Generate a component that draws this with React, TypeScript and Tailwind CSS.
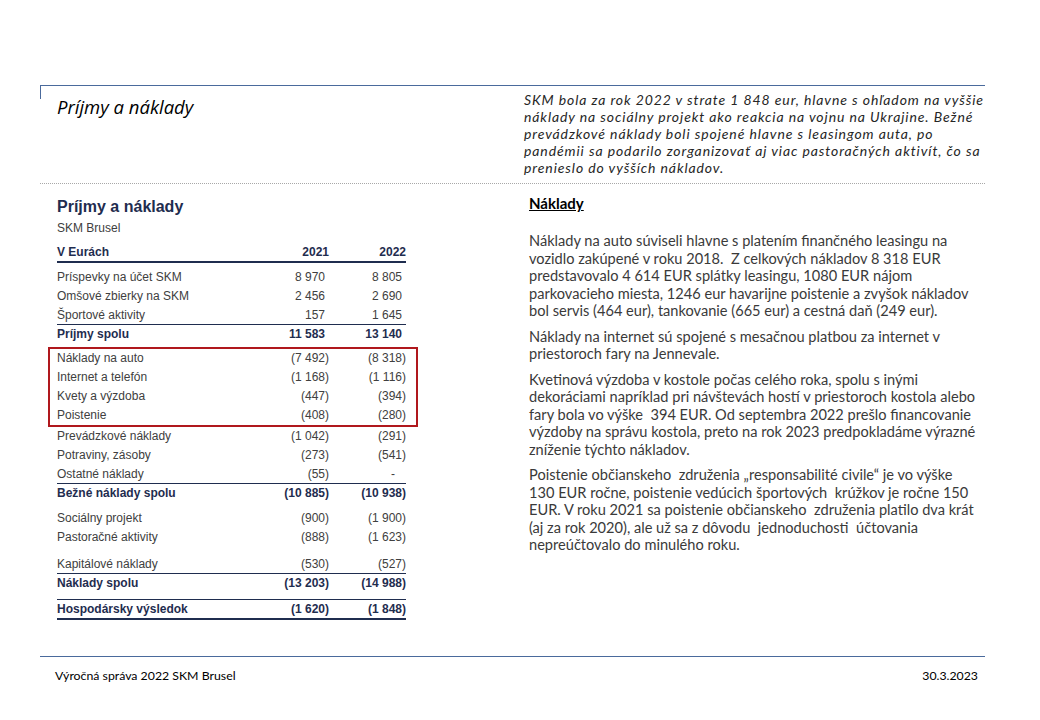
const navy = "text-[#1f2d4f]";

type RowProps = {
  label: string;
  a: string;
  b: string;
  bold?: boolean;
  line?: string;
};

function num(v: string) {
  if (v === "-") return "pr-[11px]";
  return v.startsWith("(") ? "" : "pr-[4px]";
}

function Row({ label, a, b, bold, line = "border-b border-transparent" }: RowProps) {
  return (
    <div
      className={`flex leading-[18px] ${line} ${bold ? "font-bold text-[#1f2d4f]" : "text-[#404040]"}`}
    >
      <span className="flex-1 whitespace-nowrap">{label}</span>
      <span className={`w-[90px] text-right ${num(a)}`}>{a}</span>
      <span className={`w-[77px] text-right ${num(b)}`}>{b}</span>
    </div>
  );
}

function Table() {
  return (
    <div className="w-[349px] ml-[17px] mt-[13px] text-[12px] font-['Liberation_Sans',Arial,sans-serif]">
      <div className={`text-[16px] leading-[20px] font-bold ${navy}`}>Príjmy a náklady</div>
      <div className="text-[12px] leading-[16px] mt-[3px] text-[#404040]">SKM Brusel</div>

      <div className={`flex leading-[18px] font-bold mt-[7px] border-b-2 border-[#1f2d4f] ${navy}`}>
        <span className="flex-1">V Eurách</span>
        <span className="w-[90px] text-right">2021</span>
        <span className="w-[77px] text-right">2022</span>
      </div>

      <div className="mt-[5px]">
        <Row label="Príspevky na účet SKM" a="8 970" b="8 805" />
        <Row label="Omšové zbierky na SKM" a="2 456" b="2 690" />
        <Row label="Športové aktivity" a="157" b="1 645" line="border-b border-[#1f2d4f]" />
        <Row label="Príjmy spolu" a="11 583" b="13 140" bold />
      </div>

      <div className="mt-[3px] ml-[-9px] mr-[-12px] pl-[7px] pr-[10px] border-2 border-[#b0181d]">
        <Row label="Náklady na auto" a="(7 492)" b="(8 318)" />
        <Row label="Internet a telefón" a="(1 168)" b="(1 116)" />
        <Row label="Kvety a výzdoba" a="(447)" b="(394)" />
        <Row label="Poistenie" a="(408)" b="(280)" />
      </div>

      <Row label="Prevádzkové náklady" a="(1 042)" b="(291)" />
      <Row label="Potraviny, zásoby" a="(273)" b="(541)" />
      <Row label="Ostatné náklady" a="(55)" b="-" line="border-b border-[#1f2d4f]" />
      <Row label="Bežné náklady spolu" a="(10 885)" b="(10 938)" bold />

      <div className="mt-[6px]">
        <Row label="Sociálny projekt" a="(900)" b="(1 900)" />
        <Row label="Pastoračné aktivity" a="(888)" b="(1 623)" />
      </div>

      <div className="mt-[8px]">
        <Row label="Kapitálové náklady" a="(530)" b="(527)" line="border-b border-[#1f2d4f]" />
        <Row label="Náklady spolu" a="(13 203)" b="(14 988)" bold />
      </div>

      <div className="mt-[6px]">
        <Row
          label="Hospodársky výsledok"
          a="(1 620)"
          b="(1 848)"
          bold
          line="border-t border-b-2 border-[#1f2d4f]"
        />
      </div>
    </div>
  );
}

const paragraphs: string[][] = [
  [
    "Náklady na auto súviseli hlavne s platením finančného leasingu na",
    "vozidlo zakúpené v roku 2018.  Z celkových nákladov 8 318 EUR",
    "predstavovalo 4 614 EUR splátky leasingu, 1080 EUR nájom",
    "parkovacieho miesta, 1246 eur havarijne poistenie a zvyšok nákladov",
    "bol servis (464 eur), tankovanie (665 eur) a cestná daň (249 eur).",
  ],
  [
    "Náklady na internet sú spojené s mesačnou platbou za internet v",
    "priestoroch fary na Jennevale.",
  ],
  [
    "Kvetinová výzdoba v kostole počas celého roka, spolu s inými",
    "dekoráciami napríklad pri návštevách hostí v priestoroch kostola alebo",
    "fary bola vo výške  394 EUR. Od septembra 2022 prešlo financovanie",
    "výzdoby na správu kostola, preto na rok 2023 predpokladáme výrazné",
    "zníženie týchto nákladov.",
  ],
  [
    "Poistenie občianskeho  združenia „responsabilité civile“ je vo výške",
    "130 EUR ročne, poistenie vedúcich športových  krúžkov je ročne 150",
    "EUR. V roku 2021 sa poistenie občianskeho  združenia platilo dva krát",
    "(aj za rok 2020), ale už sa z dôvodu  jednoduchosti  účtovania",
    "nepreúčtovalo do minulého roku.",
  ],
];

const intro = [
  "SKM bola za rok 2022 v strate 1 848 eur, hlavne s ohľadom na vyššie",
  "náklady na sociálny projekt ako reakcia na vojnu na Ukrajine. Bežné",
  "prevádzkové náklady boli spojené hlavne s leasingom auta, po",
  "pandémii sa podarilo zorganizovať aj viac pastoračných aktivít, čo sa",
  "prenieslo do vyšších nákladov.",
];

export default function App() {
  return (
    <div className="w-[1040px] h-[720px] bg-white flex flex-col">
      <div className="pt-[85px] pl-[40px]">
        <div className="w-[945px] h-px bg-[#4a6a9c]" />

        {/* header */}
        <div className="w-[945px] h-[98px] flex border-b border-dotted border-[#a8a8a8]">
          <div className="w-[484px] flex">
            <div className="w-px h-[13px] bg-[#4a6a9c]" />
            <div className="ml-[16px] mt-[10px] text-[18.5px] leading-[22px] italic text-black font-['Open_Sans',sans-serif]">
              Príjmy a náklady
            </div>
          </div>
          <div className="mt-[5px] text-[14px] leading-[17px] tracking-[0.9px] italic text-[#262626] font-['Lato',sans-serif]">
            {intro.map((l, i) => (
              <div key={i} className="whitespace-pre">{l}</div>
            ))}
          </div>
        </div>

        {/* body */}
        <div className="flex">
          <div className="w-[489px]">
            <Table />
          </div>
          <div className="font-['Lato',sans-serif] text-[#3a3a3a]">
            <div className="mt-[11px] text-[15px] leading-[17px] font-bold underline text-black">Náklady</div>
            <div className="mt-[20px] text-[14.6px] leading-[17.5px]">
              {paragraphs.map((p, i) => (
                <div key={i} className="mb-[8px]">
                  {p.map((l, j) => (
                    <div key={j} className="whitespace-pre">{l}</div>
                  ))}
                </div>
              ))}
            </div>
          </div>
        </div>
      </div>

      {/* footer */}
      <div className="mt-auto pl-[40px] pb-[36px]">
        <div className="w-[945px] h-px bg-[#4a6a9c]" />
        <div className="w-[945px] mt-[11px] flex justify-between pl-[15px] pr-[7px] text-[12.3px] leading-[16px] text-black font-['Lato',sans-serif]">
          <span>Výročná správa 2022 SKM Brusel</span>
          <span>30.3.2023</span>
        </div>
      </div>
    </div>
  );
}
